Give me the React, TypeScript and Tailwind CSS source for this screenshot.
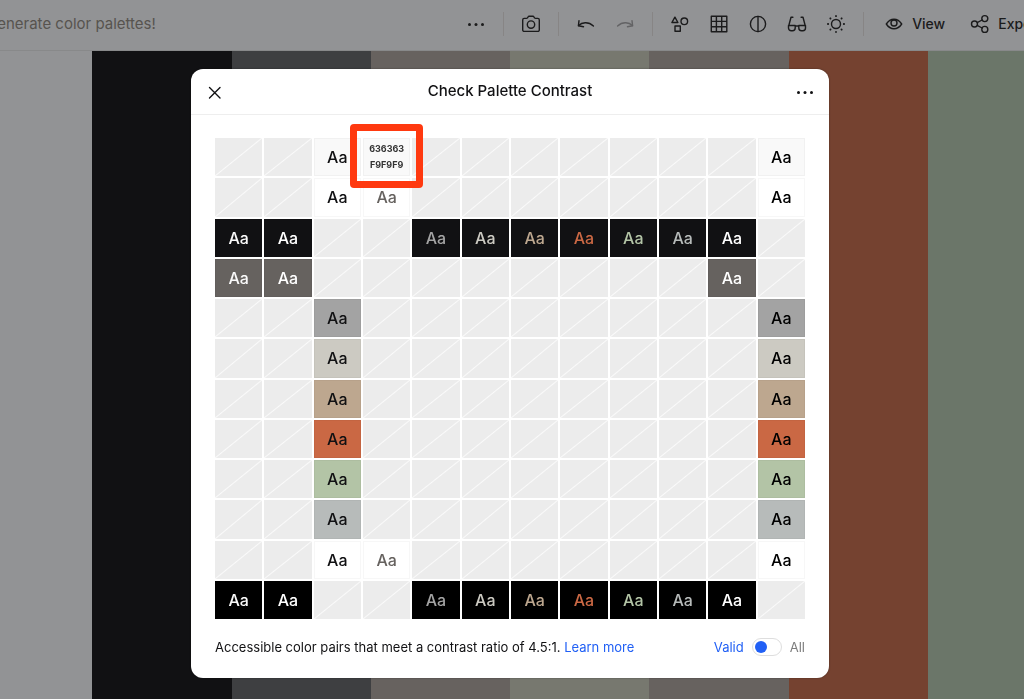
import { useState } from 'react';
import type { ReactNode } from 'react';

const palette = [
  '#F9F9F9',
  '#FFFFFF',
  '#111113',
  '#66625F',
  '#A3A3A3',
  '#CCCAC2',
  '#BDA78F',
  '#CA6844',
  '#B3C4A6',
  '#B7BBBA',
  '#FFFFFF',
  '#000000',
];

const stripes = [
  'bg-[#929395]',
  'bg-[#111113]',
  'bg-[#3e3f41]',
  'bg-[#67625f]',
  'bg-[#77786f]',
  'bg-[#67625f]',
  'bg-[#754230]',
  'bg-[#6b7669]',
];

function luminance(hex: string) {
  const [r, g, b] = [1, 3, 5].map((i) => {
    const c = parseInt(hex.slice(i, i + 2), 16) / 255;
    return c <= 0.03928 ? c / 12.92 : ((c + 0.055) / 1.055) ** 2.4;
  });
  return 0.2126 * r + 0.7152 * g + 0.0722 * b;
}

function contrast(a: string, b: string) {
  const la = luminance(a);
  const lb = luminance(b);
  return (Math.max(la, lb) + 0.05) / (Math.min(la, lb) + 0.05);
}

function Icon({ children }: { children: ReactNode }) {
  return (
    <svg
      width="20"
      height="20"
      viewBox="0 0 20 20"
      fill="none"
      stroke="currentColor"
      strokeWidth="1.4"
      strokeLinecap="round"
      strokeLinejoin="round"
      aria-hidden="true"
    >
      {children}
    </svg>
  );
}

function Dots() {
  return (
    <Icon>
      <g fill="currentColor" stroke="none">
        <circle cx="3.5" cy="10.5" r="1.5" />
        <circle cx="10" cy="10.5" r="1.5" />
        <circle cx="16.5" cy="10.5" r="1.5" />
      </g>
    </Icon>
  );
}

function ToolButton({ label, muted, children }: { label: string; muted?: boolean; children: ReactNode }) {
  return (
    <button
      type="button"
      aria-label={label}
      className={`flex h-9 w-[38px] items-center justify-center ${muted ? 'text-[#636365]' : ''}`}
    >
      {children}
    </button>
  );
}

function Separator() {
  return <div className="mx-[7px] h-6 w-px bg-[#878585]" />;
}

function Toolbar() {
  return (
    <header className="overflow-hidden border-b border-[#88898a] bg-[#929395] text-[#1b1b1c]">
      <div className="-mr-[18px] -ml-3 flex h-[50px] items-center justify-between pb-[2px]">
        <p className="text-[15px] whitespace-nowrap text-[#57534f]">generate color palettes!</p>
        <div className="flex shrink-0 items-center gap-px">
          <ToolButton label="More">
            <Dots />
          </ToolButton>
          <Separator />
          <ToolButton label="Camera">
            <Icon>
              <path d="M3.2 4.4h2.2c.5 0 .9-.2 1.1-.6l.6-1c.2-.4.6-.6 1-.6h3.8c.4 0 .8.2 1 .6l.6 1c.2.4.6.6 1.1.6h2.2a1.500 1.500 0 0 1 1.500 1.500v10a1.500 1.500 0 0 1-1.500 1.500H3.200a1.500 1.500 0 0 1-1.500-1.500v-10a1.500 1.500 0 0 1 1.500-1.500z" />
              <circle cx="10" cy="10.600" r="3.700" />
            </Icon>
          </ToolButton>
          <Separator />
          <ToolButton label="Undo">
            <Icon>
              <path d="M3 6.600l-.6 5.200 5.100.9" />
              <path d="M2.600 11.600c3.200-3.200 9.500-4.600 14.800.4" />
            </Icon>
          </ToolButton>
          <ToolButton label="Redo" muted>
            <Icon>
              <path d="M17 6.600l.6 5.200-5.100.9" />
              <path d="M17.400 11.600c-3.200-3.200-9.500-4.600-14.800.4" />
            </Icon>
          </ToolButton>
          <Separator />
          <ToolButton label="Color blindness">
            <Icon>
              <path d="M4.900 3.200l3 5.300h-6z" />
              <circle cx="14.300" cy="7.300" r="3.300" />
              <rect x="5" y="12" width="5.300" height="5.300" />
            </Icon>
          </ToolButton>
          <ToolButton label="Check contrast">
            <Icon>
              <path d="M2.300 2.300h15.500v15.500H2.300zM7.400 2.300v15.500M12.700 2.300v15.500M2.300 7.400h15.500M2.300 12.700h15.500" />
            </Icon>
          </ToolButton>
          <ToolButton label="Luminance">
            <Icon>
              <circle cx="10" cy="10" r="7.600" />
              <path d="M10 2.400v15.200" />
            </Icon>
          </ToolButton>
          <ToolButton label="Quick view">
            <Icon>
              <path d="M1.700 12L4 3.200h1.900M18.300 12L16 3.200h-1.900M1.500 11.500h6.700v2.600a2.700 2.700 0 0 1-2.700 2.700H4.200a2.700 2.700 0 0 1-2.700-2.700zM11.800 11.500h6.700v2.600a2.700 2.700 0 0 1-2.700 2.700h-1.300a2.700 2.700 0 0 1-2.700-2.700zM8.200 12h3.600" />
            </Icon>
          </ToolButton>
          <ToolButton label="Adjust">
            <Icon>
              <circle cx="10" cy="10" r="4.500" />
              <path
                strokeWidth="1.800"
                d="M10 1.900v.3M10 17.800v.3M1.900 10h.3M17.800 10h.3M4.300 4.300l.2.2M15.500 15.500l.2.2M4.300 15.700l.2-.2M15.500 4.500l.2-.2"
              />
            </Icon>
          </ToolButton>
          <Separator />
          <button type="button" className="ml-3 flex items-center gap-2 text-sm font-medium">
            <Icon>
              <path d="M2.300 10C4.400 6.700 7 5.200 10 5.200s5.600 1.500 7.700 4.800c-2.100 3.300-4.700 4.800-7.700 4.800S4.400 13.300 2.300 10z" />
              <circle cx="10" cy="9" r="3" />
            </Icon>
            View
          </button>
          <button type="button" className="ml-6 flex items-center gap-2 text-sm font-medium">
            <Icon>
              <circle cx="4.500" cy="10" r="3" />
              <circle cx="14.800" cy="4.600" r="3" />
              <circle cx="14.800" cy="15.400" r="3" />
              <path d="M7.200 8.600L12.100 6M7.200 11.400l4.900 2.600" />
            </Icon>
            Export
          </button>
        </div>
      </div>
    </header>
  );
}

function Cell({ bg, fg, showAll, codes }: { bg: string; fg: string; showAll: boolean; codes?: boolean }) {
  if (!showAll && contrast(bg, fg) < 4.5) {
    return (
      <div className="bg-[#ececec] bg-[linear-gradient(to_bottom_right,transparent_calc(50%-1px),#fafafa_50%,transparent_calc(50%+1px))]" />
    );
  }
  return (
    <button
      type="button"
      className="relative flex flex-col items-center justify-center text-base font-medium inset-ring inset-ring-black/3"
      style={{ backgroundColor: bg, color: fg }}
    >
      {codes ? (
        <>
          <span className="text-[9px] leading-4 font-bold text-[#333333]">636363</span>
          <span className="text-[9px] leading-4 font-bold text-[#333333]">F9F9F9</span>
          <span className="absolute -inset-x-[13px] -top-[14px] -bottom-3 z-10 rounded-[4px] border-[7px] border-[#ff390f]" />
        </>
      ) : (
        'Aa'
      )}
    </button>
  );
}

export default function App() {
  const [showAll, setShowAll] = useState(false);

  return (
    <div className="flex h-screen flex-col overflow-hidden font-['Inter',sans-serif]">
      <Toolbar />
      <main className="-mr-[43px] -ml-[47px] flex flex-1">
        {stripes.map((color, i) => (
          <div key={i} className={`flex-1 ${color}`} />
        ))}
      </main>

      <div className="fixed inset-0 flex items-start justify-center pt-[69px] pr-1">
        <div
          role="dialog"
          aria-labelledby="dialog-title"
          className="w-full max-w-[638px] rounded-xl bg-white text-[#111113] shadow-[0_0_2px_rgba(0,0,0,0.4)]"
        >
          <div className="flex h-[46px] items-center justify-between border-b border-[#eeeeee] px-[14px]">
            <button type="button" aria-label="Close">
              <Icon>
                <path d="M4.500 5.500l10.500 10.500M15 5.500L4.500 16" />
              </Icon>
            </button>
            <h1 id="dialog-title" className="text-[15px] font-medium">
              Check Palette Contrast
            </h1>
            <button type="button" aria-label="Options">
              <Dots />
            </button>
          </div>

          <div className="px-6 pt-[23px]">
            <div className="grid h-[481px] grid-cols-12 grid-rows-12 gap-[2px]">
              {palette.map((bg, row) =>
                palette.map((fg, col) => (
                  <Cell key={`${row}-${col}`} bg={bg} fg={fg} showAll={showAll} codes={row === 0 && col === 3} />
                ))
              )}
            </div>
          </div>

          <div className="flex items-center justify-between px-6 pt-[18px] pb-[21px] text-[13px] leading-5">
            <p>
              Accessible color pairs that meet a contrast ratio of 4.5:1.{' '}
              <a href="#contrast" className="text-[#2160f5]">
                Learn more
              </a>
            </p>
            <label className="flex items-center gap-2">
              <span className="text-[#2160f5]">Valid</span>
              <input
                type="checkbox"
                role="switch"
                checked={showAll}
                onChange={(e) => setShowAll(e.target.checked)}
                className="flex h-[18px] w-[30px] appearance-none items-center rounded-full border border-[#dedede] px-[2px] before:size-3 before:rounded-full before:bg-[#2160f5] checked:justify-end"
              />
              <span className="text-[#7d7d7d]">All</span>
            </label>
          </div>
        </div>
      </div>
    </div>
  );
}
